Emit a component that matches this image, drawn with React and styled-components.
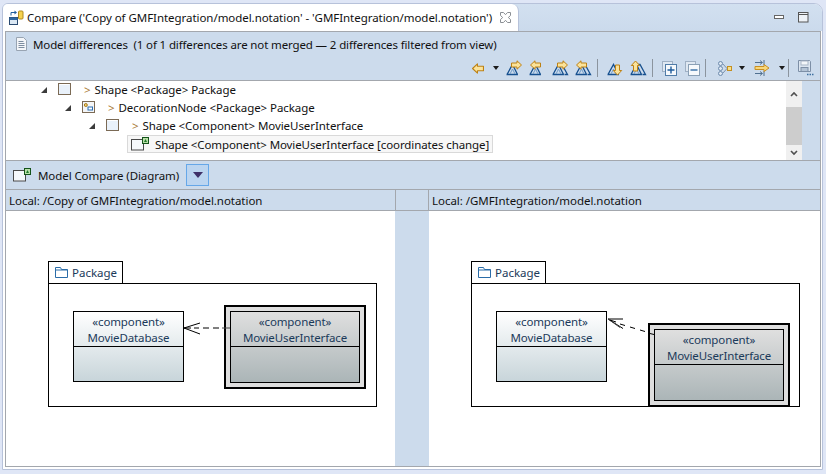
import React from "react";
import styled, { createGlobalStyle } from "styled-components";

const GlobalStyle = createGlobalStyle`
  html, body {
    margin: 0;
    padding: 0;
    background: #dfe6f6;
  }
  * {
    box-sizing: border-box;
  }
  svg {
    flex: none;
  }
`;

const Page = styled.div`
  width: 826px;
  height: 474px;
  padding: 3px 3px 4px 2px;
  background: #dfe6f6;
  font-family: "Noto Sans", "Open Sans", sans-serif;
  font-size: 11.5px;
  color: #111;
  overflow: hidden;
`;

const Frame = styled.div`
  height: 100%;
  display: flex;
  flex-direction: column;
  border: 1px solid #b7c2da;
  border-radius: 6px 9px 0 0;
  background: #fff;
  overflow: hidden;
`;

const TabBar = styled.div`
  height: 27px;
  flex: none;
  display: flex;
  background: linear-gradient(#d2e0f0, #cbdaec);
`;

const Tab = styled.div`
  width: 516px;
  height: 27px;
  display: flex;
  align-items: center;
  padding: 0 7px 0 5px;
  background: #fff;
  border-right: 1px solid #b7c2da;
  border-radius: 0 7px 0 0;
`;

const TabTitle = styled.span`
  flex: 1;
  margin-left: 3px;
  white-space: nowrap;
  letter-spacing: -0.05px;
`;

const WindowButtons = styled.div`
  margin-left: auto;
  display: flex;
  align-items: center;
  gap: 13px;
  padding-right: 13px;
`;

const Body = styled.div`
  flex: 1;
  min-height: 0;
  padding: 0 1px 2px 2px;
  background: #fff;
`;

const Panel = styled.div`
  height: 100%;
  display: flex;
  flex-direction: column;
  border: 1px solid #a3a7ad;
`;

const Heading = styled.div`
  height: 49px;
  flex: none;
  display: flex;
  flex-direction: column;
  background: #ccdbec;
  border-bottom: 1px solid #a3a7ad;
`;

const HeadingTitle = styled.div`
  height: 24px;
  display: flex;
  align-items: center;
  padding-left: 9px;
  gap: 5px;
  white-space: nowrap;
  letter-spacing: -0.13px;
`;

const Toolbar = styled.div`
  height: 24px;
  display: flex;
  align-items: center;
  padding: 0 0 0 464px;
`;

const ToolSlot = styled.span`
  display: flex;
  margin-left: ${(p) => p.$ml || 0}px;
`;

const ToolSep = styled.span`
  width: 1px;
  height: 18px;
  margin-left: ${(p) => p.$ml || 0}px;
  background: #8b949e;
`;

const Arrow = styled.span`
  width: 0;
  height: 0;
  margin-left: ${(p) => p.$ml || 0}px;
  border-left: 3.5px solid transparent;
  border-right: 3.5px solid transparent;
  border-top: 4px solid #1c1c1c;
`;

const TreeArea = styled.div`
  height: 80px;
  flex: none;
  display: flex;
  background: #ccdbec;
  border-bottom: 1px solid #a3a7ad;
`;

const Tree = styled.div`
  width: 780px;
  background: #fff;
  overflow: hidden;
  letter-spacing: -0.06px;
`;

const TreeRow = styled.div`
  height: 18px;
  display: flex;
  align-items: center;
  padding-left: ${(p) => p.$indent}px;
  padding-bottom: ${(p) => (p.$flush ? 0 : 1)}px;
  white-space: nowrap;
`;

const Twistie = styled.span`
  width: 0;
  height: 0;
  margin-right: 11px;
  border-left: 6px solid transparent;
  border-bottom: 6px solid #3c3c3c;
`;

const Chevron = styled.span`
  color: #a87832;
  margin: 0 4px 0 12px;
`;

const SelectedLabel = styled.div`
  height: 18px;
  width: 366px;
  display: flex;
  align-items: center;
  gap: 6px;
  padding-left: 3px;
  background: #f7f7f7;
  border: 1px solid #d9d9d9;
  letter-spacing: -0.1px;
`;

const Scrollbar = styled.div`
  width: 16px;
  display: flex;
  flex-direction: column;
  background: #f0f0f0;
`;

const ScrollButton = styled.div`
  display: flex;
  align-items: center;
  justify-content: center;
  height: ${(p) => p.$h}px;
`;

const ScrollThumb = styled.div`
  height: 38px;
  background: #cdcdcd;
`;

const CompareBar = styled.div`
  height: 29px;
  flex: none;
  display: flex;
  align-items: center;
  padding-left: 7px;
  background: #ccdbec;
  border-bottom: 1px solid #a3a7ad;
`;

const CompareLabel = styled.span`
  margin-left: 7px;
  width: 148px;
  white-space: nowrap;
  letter-spacing: -0.08px;
`;

const DropButton = styled.div`
  width: 23px;
  height: 22px;
  display: flex;
  align-items: center;
  justify-content: center;
  background: #bcd5f0;
  border: 1px solid #66a7e8;

  i {
    width: 0;
    height: 0;
    border-left: 5.5px solid transparent;
    border-right: 5.5px solid transparent;
    border-top: 6px solid #3f3068;
  }
`;

const PathRow = styled.div`
  height: 21px;
  flex: none;
  display: flex;
  background: #ccdbec;
  border-bottom: 1px solid #a3a7ad;
  letter-spacing: -0.04px;
`;

const PathCell = styled.div`
  display: flex;
  align-items: center;
  padding-left: ${(p) => p.$pad || 0}px;
  width: ${(p) => (p.$w ? `${p.$w}px` : "auto")};
  flex: ${(p) => (p.$w ? "none" : 1)};
  border-right: ${(p) => (p.$divide ? "1px solid #a3a7ad" : "none")};
  white-space: nowrap;
`;

const Panes = styled.div`
  flex: 1;
  min-height: 0;
  display: flex;
`;

const DiagramPane = styled.div`
  position: relative;
  width: ${(p) => (p.$w ? `${p.$w}px` : "auto")};
  flex: ${(p) => (p.$w ? "none" : 1)};
  background: #fff;
  overflow: hidden;
`;

const Sash = styled.div`
  width: 34px;
  flex: none;
  background: #ccdbec;
`;

const PackageTab = styled.div`
  position: absolute;
  left: 42px;
  top: 50px;
  width: 75px;
  height: 23px;
  display: flex;
  align-items: center;
  gap: 4px;
  padding: 0 0 1px 6px;
  background: #fff;
  border: 1px solid #000;
  color: #1b3a5a;
`;

const PackageBody = styled.div`
  position: absolute;
  left: 42px;
  top: 72px;
  width: 329px;
  height: 124px;
  background: #fff;
  border: 1px solid #000;
`;

const NodeHighlight = styled.div`
  position: absolute;
  left: ${(p) => p.$x}px;
  top: ${(p) => p.$y}px;
  width: 142px;
  height: 84px;
  padding: 4px;
  background: #dedede;
  border: 2px solid #000;
`;

const Node = styled.div`
  width: ${(p) => (p.$selected ? "100%" : "111px")};
  height: ${(p) => (p.$selected ? "100%" : "71px")};
  position: ${(p) => (p.$selected ? "static" : "absolute")};
  left: ${(p) => p.$x}px;
  top: ${(p) => p.$y}px;
  display: flex;
  flex-direction: column;
  border: 1px solid #000;
  color: #1b3a5a;
  background: ${(p) =>
    p.$selected
      ? "linear-gradient(#dfdfdf, #abb5b7)"
      : "linear-gradient(#ffffff, #c8d5da)"};
`;

const NodeHead = styled.div`
  height: 35px;
  flex: none;
  display: flex;
  flex-direction: column;
  align-items: center;
  justify-content: center;
  padding-top: 2px;
  line-height: 16px;
  border-bottom: 1px solid #000;
  white-space: nowrap;
  letter-spacing: -0.12px;
`;

const EdgeLayer = styled.svg`
  position: absolute;
  left: 0;
  top: 0;
  pointer-events: none;
`;

function CompareIcon() {
  return (
    <svg width="16" height="16" viewBox="0 0 16 16">
      <path d="M3 5.500V2.500h4" fill="none" stroke="#1f5c9c" />
      <path d="M6.500 0.500v4L9 2.500z" fill="#1f5c9c" />
      <rect x="1.500" y="7.500" width="8" height="7" fill="#dbe8f4" stroke="#2a4a70" />
      <rect x="1.500" y="7.500" width="8" height="2.500" fill="#2f66a0" />
      <rect x="10.500" y="1" width="4.500" height="8" rx="1" fill="#f6d250" stroke="#b18a1d" />
    </svg>
  );
}

function CloseIcon() {
  return (
    <svg width="11" height="11" viewBox="0 0 11 11">
      <path d="M0.500 0.500h3l2 2.200 2-2.200h3v3L8.300 5.500l2.200 2v3h-3l-2-2.200-2 2.200h-3v-3l2.200-2-2.200-2z" fill="#fff" stroke="#8b8f94" />
    </svg>
  );
}

function MinimizeIcon() {
  return (
    <svg width="11" height="5" viewBox="0 0 11 5">
      <rect x="0.500" y="0.500" width="9" height="3" fill="#fff" stroke="#666" />
    </svg>
  );
}

function MaximizeIcon() {
  return (
    <svg width="11" height="11" viewBox="0 0 11 11">
      <rect x="0.500" y="0.500" width="9.500" height="9.500" fill="#eef2f7" stroke="#555" />
      <path d="M0.500 2.500h9.500" stroke="#555" />
    </svg>
  );
}

function DocIcon() {
  return (
    <svg width="13" height="16" viewBox="0 0 13 16">
      <path d="M1.500 1.500h7l3 3v10h-10z" fill="#f4f6f9" stroke="#98a4b2" />
      <path d="M3.500 5.500h5M3.500 7.500h6M3.500 9.500h6M3.500 11.500h6" stroke="#7d8da0" />
    </svg>
  );
}

function YellowArrow({ dir = "left", x = 0, y = 0 }) {
  const rot = { left: 0, right: 180, up: 90, down: 270 }[dir];
  return (
    <g transform={`translate(${x} ${y}) rotate(${rot} 5.500 5)`}>
      <path d="M0.500 5L5 0.800V3h5.500v4H5v2.200z" fill="#fbe39a" stroke="#bd8114" strokeLinejoin="round" />
    </g>
  );
}

function Peak({ double }) {
  return (
    <g fill="none" stroke="#16508f" strokeWidth="1.300">
      <path d="M0.500 14.500h11.500M1 14.500L6.500 4.500l5 10" />
      <path d="M4 14l2.500-5 2.500 5" stroke="#6f9cc9" strokeWidth="1" />
      {double && <path d="M7 4.500h3l5.500 10h-3" />}
    </g>
  );
}

function DeltaIcon({ dir, double, ax = 5, ay = 0 }) {
  return (
    <svg width="17" height="16" viewBox="0 0 17 16">
      <Peak double={double} />
      <YellowArrow dir={dir} x={ax} y={ay} />
    </svg>
  );
}

function BackIcon() {
  return (
    <svg width="12" height="11" viewBox="0 0 11 10">
      <YellowArrow dir="left" />
    </svg>
  );
}

function StackIcon({ plus }) {
  return (
    <svg width="15" height="15" viewBox="0 0 15 15">
      <rect x="0.500" y="0.500" width="10" height="10" fill="#dfe8f2" stroke="#9fb0c4" />
      <rect x="3.500" y="3.500" width="11" height="11" fill="#f6f9fc" stroke={plus ? "#507ca8" : "#8aa0b6"} />
      <path d={plus ? "M5.500 9h7M9 5.500v7" : "M5.500 9h7"} stroke={plus ? "#1f5c9c" : "#3f76ad"} strokeWidth="1.400" />
    </svg>
  );
}

function ConsumesIcon() {
  return (
    <svg width="14" height="15" viewBox="0 0 14 15">
      <g fill="#dfe8f2" stroke="#6d8bad">
        <circle cx="2.500" cy="2.500" r="2" />
        <circle cx="2.500" cy="7.500" r="2" />
        <circle cx="2.500" cy="12.500" r="2" />
      </g>
      <path d="M5 3l4 4.500-4 4.500" fill="none" stroke="#7d93ad" />
      <rect x="9.500" y="5.500" width="4" height="4" fill="#f8e08a" stroke="#c48f20" />
    </svg>
  );
}

function MergeIcon() {
  return (
    <svg width="16" height="16" viewBox="0 0 16 16">
      <path d="M1 2.500h7M6 0.500l2.500 2-2.500 2M10 0v5M1 13.500h7M6 11.500l2.500 2-2.500 2M10 11v5" fill="none" stroke="#50708f" />
      <path d="M1 6.500h9V4.500L15 8l-5 3.500V9.500H1z" fill="#f8d77a" stroke="#c88f22" />
    </svg>
  );
}

function SaveIcon() {
  return (
    <svg width="16" height="16" viewBox="0 0 16 16">
      <path d="M0.500 0.500h11l1 1v10h-12z" fill="#dbe5f0" stroke="#7d8fa6" />
      <rect x="3" y="1" width="7" height="4" fill="#f4f7fa" stroke="#a9b6c6" />
      <rect x="3" y="7.500" width="7" height="4" fill="#b4c4d6" stroke="#7d8fa6" />
      <path d="M9 14.500h1.500M11.500 14.500H13M14 14.500h1.500" stroke="#3d6f9f" strokeWidth="1.500" />
    </svg>
  );
}

function ShapeBox() {
  return (
    <svg width="14" height="13" viewBox="0 0 14 13">
      <rect x="0.500" y="0.500" width="12" height="11" fill="#e9f1fa" stroke="#7b6a55" />
      <path d="M1.500 1.500h10" stroke="#fff" />
    </svg>
  );
}

function DecorationIcon() {
  return (
    <svg width="14" height="13" viewBox="0 0 14 13">
      <rect x="0.500" y="0.500" width="12" height="11" fill="#f4f6f8" stroke="#7b6a55" />
      <circle cx="3.800" cy="4" r="1.500" fill="#f3d070" stroke="#a47a1c" />
      <rect x="6" y="6" width="4.500" height="3" fill="#fff" stroke="#2b6cb0" />
    </svg>
  );
}

function ShapeChangeIcon() {
  return (
    <svg width="18" height="14" viewBox="0 0 18 14">
      <rect x="0.500" y="2.500" width="12" height="10.500" fill="#f5f8fb" stroke="#4a4a4a" />
      <rect x="11.500" y="0.500" width="6" height="6" fill="#b9dfa8" stroke="#14531a" />
      <path d="M13 5l1.500-3L16 5z" fill="#1f7a2a" />
    </svg>
  );
}

function FolderIcon() {
  return (
    <svg width="13" height="11" viewBox="0 0 13 11">
      <path d="M0.500 10.500V0.500h5l1 2h6v8z" fill="#fff" stroke="#2a6ca8" />
      <path d="M0.500 3h12" stroke="#2a6ca8" />
    </svg>
  );
}

function ChevronIcon({ up }) {
  return (
    <svg width="8" height="6" viewBox="0 0 8 6">
      <path d={up ? "M1 5l3-3 3 3" : "M1 1l3 3 3-3"} fill="none" stroke="#505050" strokeWidth="1.600" />
    </svg>
  );
}

function ComponentHead({ name }) {
  return (
    <NodeHead>
      <span>«component»</span>
      <span>{name}</span>
    </NodeHead>
  );
}

function PackageShape() {
  return (
    <>
      <PackageBody />
      <PackageTab>
        <FolderIcon />
        Package
      </PackageTab>
    </>
  );
}

function Diagram({ w, highlightX, highlightY, edge }) {
  return (
    <DiagramPane $w={w}>
      <PackageShape />
      <Node $x={67} $y={100}>
        <ComponentHead name="MovieDatabase" />
      </Node>
      <NodeHighlight $x={highlightX} $y={highlightY}>
        <Node $selected>
          <ComponentHead name="MovieUserInterface" />
        </Node>
      </NodeHighlight>
      {edge}
    </DiagramPane>
  );
}

function LeftEdge() {
  return (
    <EdgeLayer width="389" height="255">
      <path d="M194 112l-16 5 16 6" fill="none" stroke="#000" />
      <path d="M178 117h7M188 117h5M197 117h6M207 117h6" stroke="#000" fill="none" />
      <path d="M216 117h8" stroke="#444" fill="none" />
    </EdgeLayer>
  );
}

function RightEdge() {
  return (
    <EdgeLayer width="391" height="255">
      <path d="M194 117.500l-15-9.500h15" fill="none" stroke="#000" />
      <path d="M179 108l12 8.500" stroke="#444" fill="none" />
      <path d="M181 109l6 2M191 113l5 1.500M201 116l5 1.500M211 119l5 1.500M219 122l6 1.500" stroke="#000" fill="none" />
    </EdgeLayer>
  );
}

export default function App() {
  return (
    <>
      <GlobalStyle />
      <Page>
        <Frame>
          <TabBar>
            <Tab>
              <CompareIcon />
              <TabTitle>Compare ('Copy of GMFIntegration/model.notation' - 'GMFIntegration/model.notation')</TabTitle>
              <CloseIcon />
            </Tab>
            <WindowButtons>
              <MinimizeIcon />
              <MaximizeIcon />
            </WindowButtons>
          </TabBar>
          <Body>
            <Panel>
              <Heading>
                <HeadingTitle>
                  <DocIcon />
                  Model differences&nbsp; (1 of 1 differences are not merged — 2 differences filtered from view)
                </HeadingTitle>
                <Toolbar>
                  <ToolSlot $ml={2}><BackIcon /></ToolSlot>
                  <Arrow $ml={9} />
                  <ToolSlot $ml={7}><DeltaIcon dir="right" /></ToolSlot>
                  <ToolSlot $ml={6}><DeltaIcon dir="left" ax={1} /></ToolSlot>
                  <ToolSlot $ml={6}><DeltaIcon dir="right" double /></ToolSlot>
                  <ToolSlot $ml={6}><DeltaIcon dir="left" double ax={1} /></ToolSlot>
                  <ToolSep $ml={5} />
                  <ToolSlot $ml={9}><DeltaIcon dir="down" ax={5} ay={5} /></ToolSlot>
                  <ToolSlot $ml={6}><DeltaIcon dir="up" double ax={0} ay={1} /></ToolSlot>
                  <ToolSep $ml={5} />
                  <ToolSlot $ml={9}><StackIcon plus /></ToolSlot>
                  <ToolSlot $ml={8}><StackIcon /></ToolSlot>
                  <ToolSep $ml={5} />
                  <ToolSlot $ml={12}><ConsumesIcon /></ToolSlot>
                  <Arrow $ml={7} />
                  <ToolSlot $ml={9}><MergeIcon /></ToolSlot>
                  <Arrow $ml={9} />
                  <ToolSep $ml={3} />
                  <ToolSlot $ml={9}><SaveIcon /></ToolSlot>
                </Toolbar>
              </Heading>
              <TreeArea>
                <Tree>
                  <TreeRow $indent={35}>
                    <Twistie />
                    <ShapeBox />
                    <Chevron>&gt;</Chevron>
                    Shape &lt;Package&gt; Package
                  </TreeRow>
                  <TreeRow $indent={59}>
                    <Twistie />
                    <DecorationIcon />
                    <Chevron>&gt;</Chevron>
                    DecorationNode &lt;Package&gt; Package
                  </TreeRow>
                  <TreeRow $indent={83}>
                    <Twistie />
                    <ShapeBox />
                    <Chevron>&gt;</Chevron>
                    Shape &lt;Component&gt; MovieUserInterface
                  </TreeRow>
                  <TreeRow $indent={121} $flush>
                    <SelectedLabel>
                      <ShapeChangeIcon />
                      Shape &lt;Component&gt; MovieUserInterface [coordinates change]
                    </SelectedLabel>
                  </TreeRow>
                </Tree>
                <Scrollbar>
                  <ScrollButton $h={26}><ChevronIcon up /></ScrollButton>
                  <ScrollThumb />
                  <ScrollButton $h={15}><ChevronIcon /></ScrollButton>
                </Scrollbar>
              </TreeArea>
              <CompareBar>
                <ShapeChangeIcon />
                <CompareLabel>Model Compare (Diagram)</CompareLabel>
                <DropButton><i /></DropButton>
              </CompareBar>
              <PathRow>
                <PathCell $w={390} $pad={3} $divide>Local: /Copy of GMFIntegration/model.notation</PathCell>
                <PathCell $w={33} $divide />
                <PathCell $pad={3}>Local: /GMFIntegration/model.notation</PathCell>
              </PathRow>
              <Panes>
                <Diagram w={389} highlightX={218} highlightY={94} edge={<LeftEdge />} />
                <Sash />
                <Diagram highlightX={219} highlightY={112} edge={<RightEdge />} />
              </Panes>
            </Panel>
          </Body>
        </Frame>
      </Page>
    </>
  );
}
